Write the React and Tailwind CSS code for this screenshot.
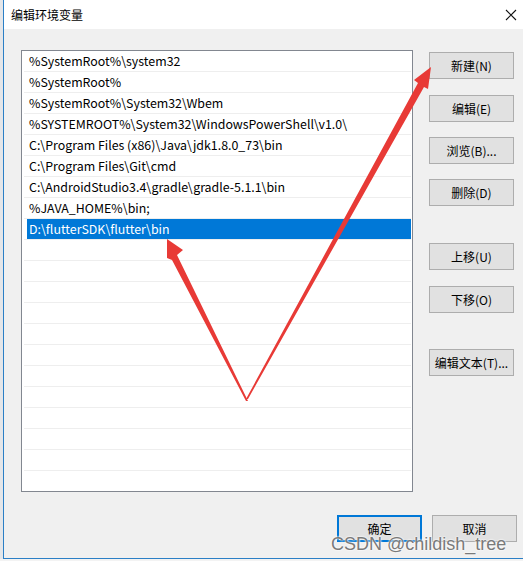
// Windows "编辑环境变量" dialog
const paths = [
  '%SystemRoot%\\system32',
  '%SystemRoot%',
  '%SystemRoot%\\System32\\Wbem',
  '%SYSTEMROOT%\\System32\\WindowsPowerShell\\v1.0\\',
  'C:\\Program Files (x86)\\Java\\jdk1.8.0_73\\bin',
  'C:\\Program Files\\Git\\cmd',
  'C:\\AndroidStudio3.4\\gradle\\gradle-5.1.1\\bin',
  '%JAVA_HOME%\\bin;',
  'D:\\flutterSDK\\flutter\\bin',
];

const rows = [...paths, ...Array(12).fill('')];

function Btn({ label, primary }) {
  return (
    <div
      className={`w-[85px] h-[27px] flex items-center justify-center text-[12px] text-black bg-[#e1e1e1] ${
        primary ? 'border-2 border-[#0078d7]' : 'border border-[#adadad]'
      }`}
    >
      {label}
    </div>
  );
}

export default function App() {
  return (
    <div
      className="relative w-[523px] h-[561px] overflow-hidden flex flex-col bg-white"
      style={{ fontFamily: '"Noto Sans CJK SC", "Noto Sans", sans-serif' }}
    >
      <div className="flex-1 flex">
        {/* background window edge */}
        <div className="w-[3px] bg-[#e4e6e9]" />

        <div className="flex-1 flex flex-col border-l border-b border-[#2b7fc6]">
          {/* Title bar */}
          <div className="h-[29px] bg-white flex items-center justify-between pl-[7px] pr-[5px]">
            <span className="text-[12px] text-black">编辑环境变量</span>
            <svg width="12" height="12" viewBox="0 0 12 12" className="mr-[1px]">
              <path d="M1 1L11 11M11 1L1 11" stroke="#111" strokeWidth="1.1" />
            </svg>
          </div>

          {/* Body */}
          <div className="flex-1 bg-[#f0f0f0] flex flex-col pl-[17px] pt-[21px]">
            <div className="flex gap-[16px]">
              {/* List */}
              <div className="w-[392px] h-[442px] bg-white border border-[#828790] overflow-hidden pl-[2px] pr-[1px]">
                {rows.map((p, i) => (
                  <div key={i} className="h-[21px] border-b border-[#eeeeee] flex">
                    <div
                      className={`flex-1 ml-[3px] flex items-center pl-[2px] text-[12.4px] whitespace-nowrap ${
                        i === 8 ? 'bg-[#0078d7] text-white' : 'text-black'
                      }`}
                    >
                      {p}
                    </div>
                  </div>
                ))}
              </div>

              {/* Side buttons */}
              <div className="flex flex-col pt-[2px]">
                <Btn label="新建(N)" />
                <div className="h-[16px]" />
                <Btn label="编辑(E)" />
                <div className="h-[15px]" />
                <Btn label="浏览(B)..." />
                <div className="h-[15px]" />
                <Btn label="删除(D)" />
                <div className="h-[37px]" />
                <Btn label="上移(U)" />
                <div className="h-[16px]" />
                <Btn label="下移(O)" />
                <div className="h-[36px]" />
                <Btn label="编辑文本(T)..." />
              </div>
            </div>

            {/* Bottom buttons */}
            <div className="flex justify-end gap-[10px] pr-[6px] mt-[23px]">
              <Btn label="确定" primary />
              <Btn label="取消" />
            </div>
          </div>
        </div>
      </div>
      <div className="h-[2px] bg-[#f3f3f3]" />

      {/* Watermark */}
      <div
        className="absolute left-[331px] top-[535px] text-[18px] text-[#7a7a7a] leading-none"
        style={{ fontFamily: '"Liberation Sans", Arial, sans-serif', textShadow: '0 0 2px #fff, 0 0 2px #fff' }}
      >
        CSDN @childish_tree
      </div>

      {/* Red arrows */}
      <svg className="absolute left-0 top-0 pointer-events-none" width="523" height="561">
        <polygon
          points="167,239 183,250 177,255 248,401 246,401 172,260 167,258"
          fill="#e83a36"
        />
        <polygon
          points="431,67 428,89 424,87 248,399 246,399 418,83 414,80"
          fill="#e83a36"
        />
      </svg>
    </div>
  );
}
